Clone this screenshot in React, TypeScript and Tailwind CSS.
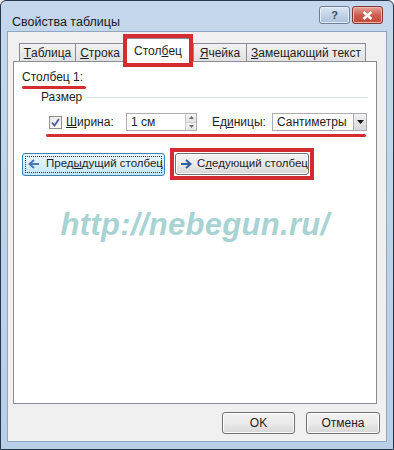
import React from 'react';

const RED = 'bg-[#d52b33]';

const Tab: React.FC<{ label: React.ReactNode; w: string }> = ({ label, w }) => (
  <div
    className={`${w} h-[18px] -mr-px flex items-center justify-center whitespace-nowrap border border-b-0 border-[#898c95] bg-gradient-to-b from-[#f3f3f3] to-[#e1e1e1] text-[12px] text-[#1e1e1e]`}
  >
    {label}
  </div>
);

const WinButton: React.FC<{ children: React.ReactNode; w: string }> = ({ children, w }) => (
  <button
    className={`${w} h-[22px] rounded-[3px] border border-[#707070] bg-gradient-to-b from-[#f2f2f2] via-[#ebebeb] to-[#d6d6d6] text-[12px] text-[#1e1e1e] shadow-[inset_0_0_0_1px_#fcfcfc]`}
  >
    {children}
  </button>
);

const Arrow: React.FC = () => (
  <svg width="12" height="10" viewBox="0 0 12 10" className="shrink-0">
    <path d="M1 5h10M6 1l4.5 4L6 9" fill="none" stroke="#2f5e9e" strokeWidth="2" />
  </svg>
);

const ArrowLeft: React.FC = () => (
  <svg width="12" height="10" viewBox="0 0 12 10" className="shrink-0">
    <path d="M11 5H1M6 1L1.5 5 6 9" fill="none" stroke="#4a79b3" strokeWidth="2" />
  </svg>
);

export default function App() {
  return (
    <div className="w-[394px] h-[450px] bg-[#f6f8fb] font-['Liberation_Sans','Noto_Sans',sans-serif]">
      <div className="w-[394px] h-[450px] flex flex-col border border-[#27384d] rounded-t-[6px] bg-gradient-to-b from-[#c4d7ec] to-[#b8cfe8] overflow-hidden">
        {/* title bar */}
        <div className="h-[30px] flex items-center pl-[11px] pr-[10px]">
          <span className="text-[12.5px] text-[#1a1a1a] mt-[12px] whitespace-nowrap">Свойства таблицы</span>
          <div className="ml-auto flex gap-[2px] mt-[-2px]">
            <div className="w-[31px] h-[18px] rounded-[3px] border border-[#6d7f98] bg-gradient-to-b from-[#dbe6f3] via-[#c2d3e7] to-[#a9bfdb] flex items-center justify-center text-[11px] font-bold text-[#3d4e67] shadow-[inset_0_0_0_1px_#e6eef8]">
              ?
            </div>
            <div className="w-[31px] h-[18px] rounded-[3px] border border-[#7a3a35] bg-gradient-to-b from-[#e5a69b] via-[#cf5c4f] to-[#c44a3a] flex items-center justify-center shadow-[inset_0_0_0_1px_#eeb8ae]">
              <svg width="11" height="9" viewBox="0 0 11 9">
                <path d="M1.5 1l8 7M9.5 1l-8 7" stroke="#ffffff" strokeWidth="2.4" />
              </svg>
            </div>
          </div>
        </div>

        {/* client area */}
        <div className="mx-[6px] flex-1 border border-[#8fa6c2] bg-[#f0f0f0] flex flex-col">
          {/* tabs */}
          <div className="h-[29px] pl-[11px] flex items-end relative z-10">
            <Tab w="w-[57px]" label={<><u>Т</u>аблица</>} />
            <Tab w="w-[50px]" label={<><u>С</u>трока</>} />
            <div className="relative w-[68px] h-[24px] -mb-px mr-[1px] bg-white border border-b-0 border-[#898c95] flex items-center justify-center whitespace-nowrap text-[12px] text-[#1e1e1e]">
              Стол<u>б</u>ец
              <div className="absolute -left-[2px] -right-[2px] -top-[5px] -bottom-[5px] border-[4px] border-[#d52b33]" />
            </div>
            <Tab w="w-[54px]" label={<><u>Я</u>чейка</>} />
            <Tab w="w-[120px]" label={<><u>З</u>амещающий текст</>} />
          </div>

          {/* panel */}
          <div className="ml-[5px] w-[364px] h-[343px] border border-[#898c95] bg-white flex flex-col text-[12px] text-[#1e1e1e] whitespace-nowrap">
            <div className="pl-[8px] pt-[7px] leading-[16px]">Столбец 1:</div>
            <div className={`ml-[8px] mt-[1px] w-[64px] h-[3px] rounded-full ${RED}`} />

            <div className="flex items-center ml-[27px] mt-[0px] mr-[8px] h-[16px]">
              <span>Размер</span>
              <div className="flex-1 ml-[4px] h-px bg-[#d5dfe5]" />
            </div>

            <div className="flex items-center ml-[35px] mt-[8px] h-[18px]">
              <div className="w-[13px] h-[13px] border border-[#8e8f8f] bg-gradient-to-br from-[#e6e6e6] to-[#ffffff] flex items-center justify-center">
                <svg width="9" height="9" viewBox="0 0 9 9">
                  <path d="M1 4.5l2.5 3L8 1" fill="none" stroke="#4a5f97" strokeWidth="1.8" />
                </svg>
              </div>
              <span className="ml-[4px] w-[60px]">
                <u>Ш</u>ирина:
              </span>
              <div className="w-[71px] h-[18px] flex border border-[#abadb3]">
                <div className="flex-1 pl-[4px] leading-[16px]">1 см</div>
                <div className="w-[11px] flex flex-col border-l border-[#c9c9c9]">
                  <div className="flex-1 flex items-center justify-center bg-gradient-to-b from-[#f4f4f4] to-[#e4e4e4] border-b border-[#c9c9c9]">
                    <svg width="5" height="3" viewBox="0 0 5 3"><path d="M0 3L2.5 0 5 3z" fill="#6a6a6a" /></svg>
                  </div>
                  <div className="flex-1 flex items-center justify-center bg-gradient-to-b from-[#f4f4f4] to-[#e4e4e4]">
                    <svg width="5" height="3" viewBox="0 0 5 3"><path d="M0 0L2.5 3 5 0z" fill="#6a6a6a" /></svg>
                  </div>
                </div>
              </div>
              <span className="ml-[15px] w-[60px]">
                Ед<u>и</u>ницы:
              </span>
              <div className="w-[95px] h-[18px] flex border border-[#abadb3]">
                <div className="flex-1 pl-[4px] leading-[16px]">Сантиметры</div>
                <div className="w-[13px] border-l border-[#a9a9a9] bg-gradient-to-b from-[#f2f2f2] to-[#d8d8d8] flex items-center justify-center">
                  <svg width="7" height="4" viewBox="0 0 7 4"><path d="M0 0h7L3.5 4z" fill="#1a1a1a" /></svg>
                </div>
              </div>
            </div>
            <div className={`ml-[32px] mt-[3px] w-[320px] h-[3px] rounded-full ${RED}`} />

            <div className="flex items-center ml-[8px] mt-[11px]">
              <button className="w-[143px] h-[23px] rounded-[3px] border border-[#3c7fb1] bg-gradient-to-b from-[#eaf6fd] via-[#d9f0fc] to-[#bee6fd] p-[2px]">
                <div className="h-full border border-dotted border-[#333] flex items-center gap-[6px] pl-[2px] text-[11.5px]">
                  <ArrowLeft />
                  <span>
                    Пред<u>ы</u>дущий столбец
                  </span>
                </div>
              </button>
              <div className="ml-[5px] border-[4px] border-[#d52b33] p-[1px] bg-white">
                <button className="w-[134px] h-[22px] rounded-[3px] border border-[#707070] bg-gradient-to-b from-[#f2f2f2] via-[#ebebeb] to-[#d6d6d6] flex items-center gap-[5px] pl-[4px] text-[11.5px] shadow-[inset_0_0_0_1px_#fcfcfc]">
                  <Arrow />
                  <span>
                    С<u>л</u>едующий столбец
                  </span>
                </button>
              </div>
            </div>

            <div className="mt-[28px] text-center font-['Liberation_Sans',sans-serif] italic font-bold text-[31px] leading-[34px] text-[#a8d3d3] tracking-[0.3px]">
              http://nebegun.ru/
            </div>
          </div>

          {/* footer */}
          <div className="flex justify-end gap-[11px] pr-[6px] mt-[8px]">
            <WinButton w="w-[73px]">OK</WinButton>
            <WinButton w="w-[74px]">Отмена</WinButton>
          </div>
        </div>
        <div className="h-[7px]" />
      </div>
    </div>
  );
}
